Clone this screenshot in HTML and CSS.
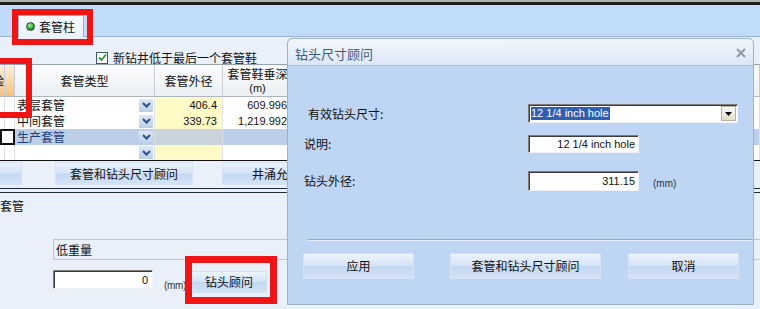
FILE: index.html
```html
<!DOCTYPE html>
<html>
<head>
    <meta charset="utf-8">
    <title>套管柱</title>
    <link rel="stylesheet" href="styles.css">
</head>
<body>
    <div class="window">
        <div class="topline"></div>
        <div class="tabstrip">
            <div class="tab"><span class="dot"></span>套管柱</div>
        </div>
        <div class="content">
            <div class="checkrow">
                <span class="check">
                    <svg width="9" height="9" viewBox="0 0 9 9"><polyline points="1,4.5 3.5,7 8,1.5" fill="none" stroke="#21a02a" stroke-width="1.8"/></svg>
                </span>
                新钻井低于最后一个套管鞋
            </div>

            <div class="grid">
                <div class="hd c0"><span>验</span></div>
                <div class="hd c1"></div>
                <div class="hd">套管类型</div>
                <div class="hd">套管外径</div>
                <div class="hd two">套管鞋垂深<span class="unit">(m)</span></div>
                <div class="hd"></div>

                <div class="cell"></div>
                <div class="cell sel-col"></div>
                <div class="cell type">表层套管<span class="arrow"><svg width="9" height="6" viewBox="0 0 9 6"><polyline points="1,1 4.5,4.5 8,1" fill="none" stroke="#2d4f8c" stroke-width="2"/></svg></span></div>
                <div class="cell od num">406.4</div>
                <div class="cell num">609.996</div>
                <div class="cell"></div>

                <div class="cell"></div>
                <div class="cell sel-col"></div>
                <div class="cell type">中间套管<span class="arrow"><svg width="9" height="6" viewBox="0 0 9 6"><polyline points="1,1 4.5,4.5 8,1" fill="none" stroke="#2d4f8c" stroke-width="2"/></svg></span></div>
                <div class="cell od num">339.73</div>
                <div class="cell num">1,219.992</div>
                <div class="cell"></div>

                <div class="cell current"></div>
                <div class="cell type active">生产套管<span class="arrow"><svg width="9" height="6" viewBox="0 0 9 6"><polyline points="1,1 4.5,4.5 8,1" fill="none" stroke="#2d4f8c" stroke-width="2"/></svg></span></div>
                <div class="cell od active-od"></div>
                <div class="cell active"></div>
                <div class="cell active"></div>

                <div class="cell"></div>
                <div class="cell sel-col"></div>
                <div class="cell type"><span class="arrow"><svg width="9" height="6" viewBox="0 0 9 6"><polyline points="1,1 4.5,4.5 8,1" fill="none" stroke="#2d4f8c" stroke-width="2"/></svg></span></div>
                <div class="cell od"></div>
                <div class="cell"></div>
                <div class="cell"></div>
            </div>

            <div class="btnrow">
                <button class="btn b-first"></button>
                <button class="btn b-advisor">套管和钻头尺寸顾问</button>
                <button class="btn b-kick">井涌允许量</button>
            </div>
            <div class="divider"></div>

            <div class="section-label">套管</div>
            <div class="groupbox">低重量</div>
            <div class="weight-row">
                <div class="textbox num">0</div>
                <span class="unit-label">(mm)</span>
                <button class="btn b-bit">钻头顾问</button>
            </div>
        </div>

        <div class="dialog">
            <div class="dlg-title">
                钻头尺寸顾问
                <svg class="close" width="10" height="10" viewBox="0 0 10 10"><path d="M1 1 L9 9 M9 1 L1 9" stroke="#8a98a8" stroke-width="2"/></svg>
            </div>
            <div class="dlg-body">
                <div class="field f-size">
                    <label>有效钻头尺寸:</label>
                    <div class="combo">
                        <span class="picked">12 1/4 inch hole</span>
                        <span class="drop"><svg width="7" height="4" viewBox="0 0 7 4"><polygon points="0,0 7,0 3.5,4" fill="#000"/></svg></span>
                    </div>
                </div>
                <div class="field f-desc">
                    <label>说明:</label>
                    <div class="textbox num">12 1/4 inch hole</div>
                </div>
                <div class="field f-od">
                    <label>钻头外径:</label>
                    <div class="textbox num">311.15</div>
                    <span class="unit-label">(mm)</span>
                </div>
                <div class="sep"></div>
                <div class="actions">
                    <button class="btn d-apply">应用</button>
                    <button class="btn d-advisor">套管和钻头尺寸顾问</button>
                    <button class="btn d-cancel">取消</button>
                </div>
            </div>
        </div>

        <div class="mark mark-tab"></div>
        <div class="mark mark-col"></div>
        <div class="mark mark-bit"></div>
    </div>
</body>
</html>
```

FILE: styles.css
```css
body {
    margin: 0;
    font-family: "Noto Sans CJK SC", sans-serif;
    font-size: 12px;
    color: #111;
    background-color: #e9f0fa;
}
.window {
    position: relative;
    width: 760px;
    height: 309px;
    overflow: hidden;
    background-color: #e9f0fa;
}
.num {
    font-family: "Liberation Sans", Arial, sans-serif;
    font-size: 11px;
}

/* top strip and tab */
.topline {
    height: 3px;
    border-top: 2px solid #aab6ae;
    background-color: #1b1b1b;
}
.tabstrip {
    height: 31px;
    display: flex;
    align-items: flex-end;
    padding-left: 18px;
    background-color: #c1dbfb;
    border-bottom: 1px solid #98b2d2;
}
.tab {
    display: flex;
    align-items: center;
    gap: 4px;
    width: 57px;
    height: 21px;
    padding-left: 7px;
    margin-bottom: -1px;
    line-height: 14px;
    border: 1px solid #9fb4cf;
    border-bottom: none;
    background: linear-gradient(#f8fbfe, #eaf1fa);
}
.dot {
    width: 7px;
    height: 7px;
    border-radius: 50%;
    border: 1px solid #2b4a38;
    background: radial-gradient(circle at 40% 35%, #a6f5a0 0, #2ea83a 55%, #0d5a1c 100%);
}

/* checkbox row */
.checkrow {
    display: flex;
    align-items: center;
    gap: 5px;
    height: 13px;
    padding: 14px 0 0 96px;
    line-height: 14px;
}
.check {
    display: flex;
    align-items: center;
    justify-content: center;
    width: 10px;
    height: 10px;
    border: 1px solid #3d5a6c;
    background-color: #fff;
}

/* grid */
.grid {
    display: grid;
    grid-template-columns: 5px 10px 140px 68px 70px 1fr;
    grid-template-rows: 32px 16px 16px 16px 15px;
    border-top: 1px solid #98a3b2;
    border-bottom: 1px solid #111;
    line-height: 14px;
}
.hd {
    display: flex;
    align-items: center;
    justify-content: center;
    border-right: 1px solid #c6ccd5;
    border-bottom: 1px solid #aeb6c2;
    background: linear-gradient(#fbfcfd, #eceff3);
}
.hd.two {
    flex-direction: column;
    white-space: nowrap;
    line-height: 15px;
}
.unit {
    font-family: "Liberation Sans", Arial, sans-serif;
    font-size: 11px;
}
.hd.c0 {
    justify-content: flex-end;
    overflow: hidden;
}
.hd.c0, .hd.c1 {
    background: linear-gradient(#fdf1de, #f2c27f);
}
.cell {
    display: flex;
    align-items: center;
    border-right: 1px solid #dde2ea;
    background-color: #fff;
    white-space: nowrap;
    overflow: hidden;
}
.cell.type {
    padding-left: 2px;
}
.cell.num {
    justify-content: flex-end;
    padding-right: 5px;
}
.cell.od {
    background-color: #fffac6;
}
.cell.current {
    grid-column: span 2;
    border: 2px solid #111;
    background-color: #fff;
}
.cell.active {
    background-color: #bccfe9;
    color: #1d3e78;
}
.cell.active-od {
    background-color: #c9d3dc;
}
.arrow {
    display: flex;
    align-items: center;
    justify-content: center;
    width: 14px;
    height: 13px;
    margin: 0 1px 0 auto;
    background: linear-gradient(#dbe7f6, #b9cfea);
}

/* buttons */
.btn {
    font-family: "Noto Sans CJK SC", sans-serif;
    font-size: 12px;
    line-height: 14px;
    color: #111;
    padding: 0;
    border: 1px solid #d3e1f3;
    background: linear-gradient(#edf4fc, #d4e3f6 48%, #c4d8f2 52%, #d3e3f7);
    white-space: nowrap;
    overflow: hidden;
}
.btnrow {
    display: flex;
    padding-top: 1px;
    height: 23px;
}
.btnrow .btn {
    flex: none;
    height: 23px;
}
.b-first {
    width: 60px;
    margin-left: -38px;
}
.b-advisor {
    width: 138px;
    margin-left: 33px;
}
.b-kick {
    width: 120px;
    margin-left: 29px;
}
.divider {
    height: 3px;
    margin-top: 3px;
    border-top: 1px solid #1e2b3a;
    border-bottom: 1px solid #1e2b3a;
}

/* lower part */
.section-label {
    padding-top: 6px;
    line-height: 14px;
}
.groupbox {
    margin: 26px 0 0 53px;
    height: 19px;
    padding-left: 2px;
    line-height: 19px;
    border: 1px solid #bcc6d4;
    border-right: none;
}
.weight-row {
    display: flex;
    align-items: flex-start;
    margin: 10px 0 0 53px;
}
.textbox {
    box-sizing: border-box;
    display: flex;
    align-items: center;
    justify-content: flex-end;
    padding-right: 4px;
    background-color: #fff;
    border-top: 1px solid #7c7c7c;
    border-left: 1px solid #7c7c7c;
    border-right: 1px solid #eef2f8;
    border-bottom: 1px solid #eef2f8;
    box-shadow: inset 1px 1px 0 #3c3c3c;
}
.weight-row .textbox {
    width: 100px;
    height: 19px;
}
.unit-label {
    font-family: "Liberation Sans", Arial, sans-serif;
    font-size: 10px;
    color: #333;
}
.weight-row .unit-label {
    margin: 10px 0 0 11px;
    letter-spacing: -0.3px;
}
.b-bit {
    width: 76px;
    height: 22px;
    margin: 1px 0 0 5px;
}

/* dialog */
.dialog {
    position: absolute;
    left: 287px;
    top: 38px;
    width: 467px;
    height: 267px;
    box-sizing: border-box;
    border: 1px solid #9cb1cc;
    border-radius: 5px 5px 0 0;
    background-color: #bed5f3;
}
.dlg-title {
    display: flex;
    align-items: center;
    justify-content: space-between;
    height: 27px;
    padding: 2px 7px 0 7px;
    box-sizing: border-box;
    font-size: 13px;
    color: #3e5a78;
    border-bottom: 1px solid #a8bdd8;
    border-radius: 5px 5px 0 0;
    background: linear-gradient(#f3f7fc, #dce7f6);
}
.dlg-body {
    padding: 38px 1px 0 16px;
}
.field {
    display: flex;
    align-items: center;
    line-height: 14px;
}
.field label {
    width: 224px;
    flex: none;
}
.f-size label {
    padding-left: 4px;
    width: 220px;
}
.f-desc {
    margin-top: 12px;
}
.f-od {
    margin-top: 18px;
}
.combo {
    box-sizing: border-box;
    display: flex;
    align-items: center;
    justify-content: space-between;
    width: 210px;
    height: 19px;
    padding: 0 1px 0 2px;
    background-color: #fff;
    border-top: 1px solid #7c7c7c;
    border-left: 1px solid #7c7c7c;
    border-right: 1px solid #eef2f8;
    border-bottom: 1px solid #eef2f8;
    box-shadow: inset 1px 1px 0 #3c3c3c;
}
.picked {
    font-family: "Liberation Sans", Arial, sans-serif;
    font-size: 11px;
    line-height: 13px;
    padding-right: 1px;
    color: #fff;
    background-color: #2f5fb3;
}
.drop {
    display: flex;
    align-items: center;
    justify-content: center;
    box-sizing: border-box;
    width: 15px;
    height: 15px;
    border: 1px solid #b6b29e;
    background: linear-gradient(#fbfaf5, #e2ddcc);
}
.f-desc .textbox {
    width: 111px;
    height: 18px;
    padding-right: 3px;
}
.f-od .textbox {
    width: 111px;
    height: 20px;
    padding-right: 3px;
}
.f-od .unit-label {
    margin-left: 14px;
    padding-top: 6px;
}
.sep {
    margin: 48px 0 0 4px;
    border-top: 1px solid #98a9be;
    border-bottom: 1px solid #e4edf9;
}
.actions {
    display: flex;
    margin-top: 12px;
}
.actions .btn {
    height: 26px;
}
.d-apply {
    width: 111px;
    margin-left: -1px;
}
.d-advisor {
    width: 151px;
    margin-left: 36px;
}
.d-cancel {
    width: 111px;
    margin-left: 27px;
}

/* red annotation frames */
.mark {
    position: absolute;
    box-sizing: border-box;
    border: 6px solid #f01414;
}
.mark-tab {
    left: 12px;
    top: 9px;
    width: 81px;
    height: 36px;
}
.mark-col {
    left: -6px;
    top: 58px;
    width: 38px;
    height: 60px;
}
.mark-bit {
    left: 185px;
    top: 256px;
    width: 92px;
    height: 48px;
    border-width: 7px;
}
```
